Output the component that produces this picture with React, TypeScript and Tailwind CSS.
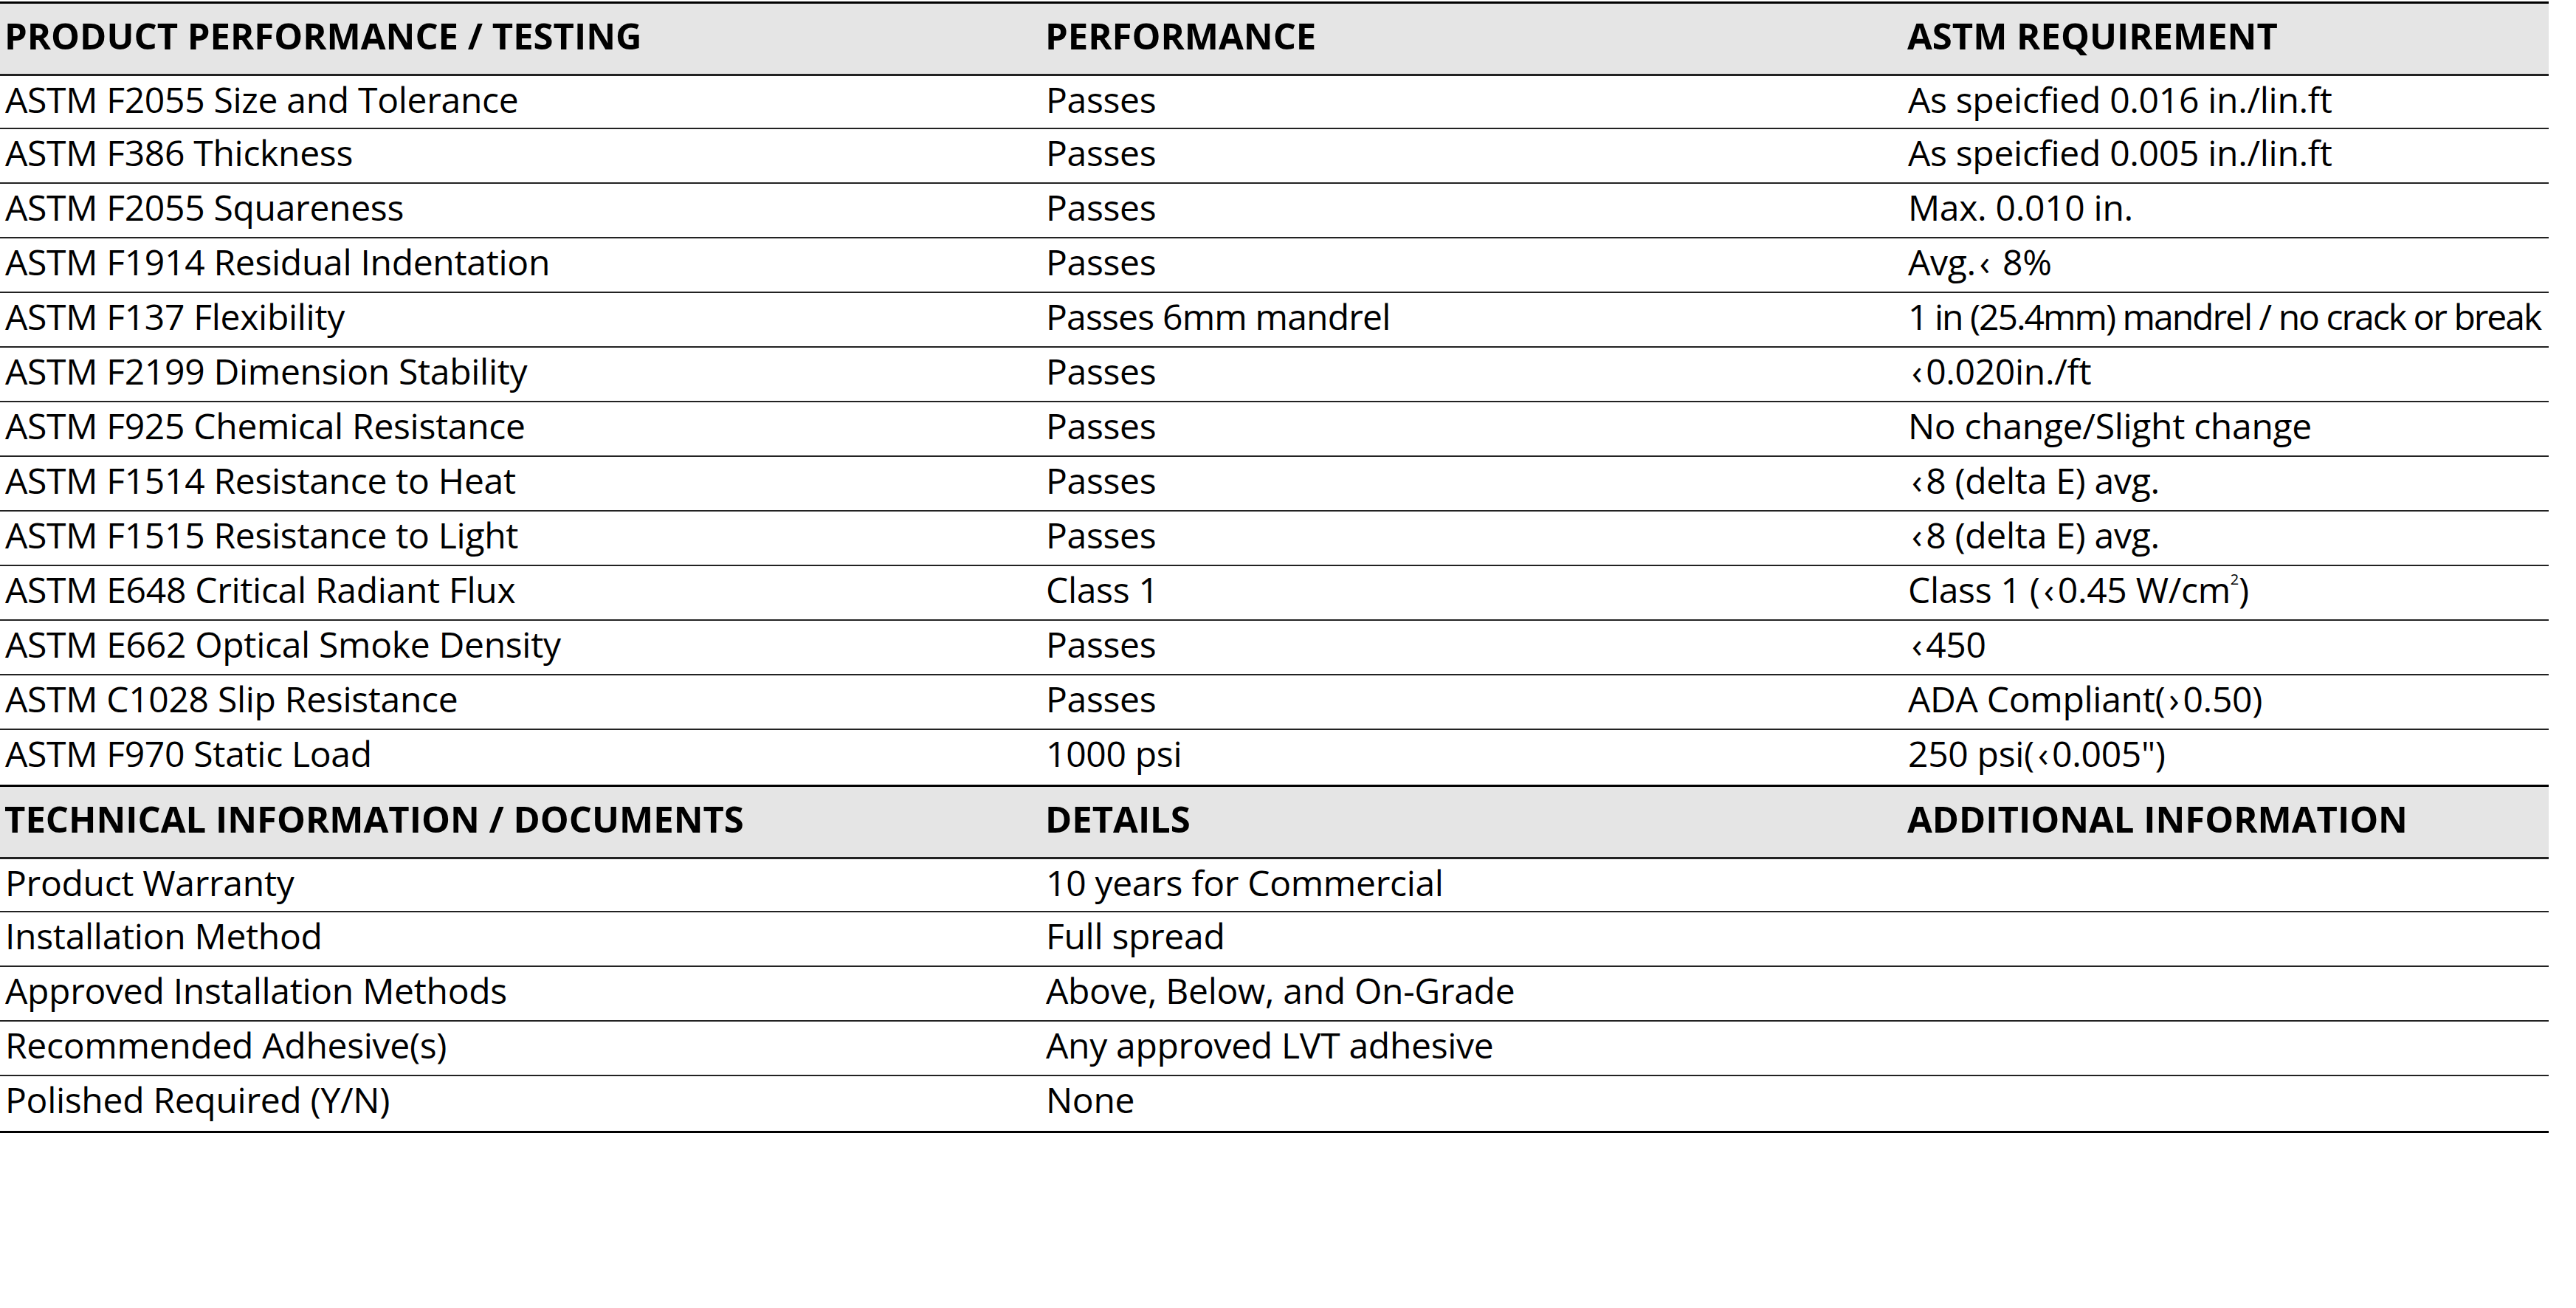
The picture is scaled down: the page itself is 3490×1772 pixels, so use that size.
import type { ReactNode } from "react";

const Lt = () => <span className="px-[5px]">‹</span>;
const Gt = () => <span className="px-[5px]">›</span>;

type Row = [ReactNode, ReactNode, ReactNode];

const performance: Row[] = [
  ["ASTM F2055 Size and Tolerance", "Passes", "As speicfied 0.016 in./lin.ft"],
  ["ASTM F386 Thickness", "Passes", "As speicfied 0.005 in./lin.ft"],
  ["ASTM F2055 Squareness", "Passes", "Max. 0.010 in."],
  ["ASTM F1914 Residual Indentation", "Passes", <>Avg.<Lt /> 8%</>],
  [
    "ASTM F137 Flexibility",
    <span className="tracking-[-0.8px]">Passes 6mm mandrel</span>,
    <span className="tracking-[-2px]">1 in (25.4mm) mandrel / no crack or break</span>,
  ],
  ["ASTM F2199 Dimension Stability", "Passes", <><Lt />0.020in./ft</>],
  ["ASTM F925 Chemical Resistance", "Passes", "No change/Slight change"],
  ["ASTM F1514 Resistance to Heat", "Passes", <><Lt />8 (delta E) avg.</>],
  ["ASTM F1515 Resistance to Light", "Passes", <><Lt />8 (delta E) avg.</>],
  ["ASTM E648 Critical Radiant Flux", "Class 1", <>Class 1 (<Lt />0.45 W/cm<span className="text-[20px] align-top">2</span>)</>],
  ["ASTM E662 Optical Smoke Density", "Passes", <><Lt />450</>],
  ["ASTM C1028 Slip Resistance", "Passes", <>ADA Compliant(<Gt />0.50)</>],
  ["ASTM F970 Static Load", "1000 psi", <>250 psi(<Lt />0.005")</>],
];

const technical: Row[] = [
  ["Product Warranty", "10 years for Commercial", ""],
  ["Installation Method", "Full spread", ""],
  ["Approved Installation Methods", "Above, Below, and On-Grade", ""],
  ["Recommended Adhesive(s)", "Any approved LVT adhesive", ""],
  ["Polished Required (Y/N)", "None", ""],
];

const cols = "grid grid-cols-[1410px_1168px_1fr]";

function Section({ head, rows }: { head: [string, string, string]; rows: Row[] }) {
  return (
    <div>
      <div className={`${cols} h-[101px] bg-[#e5e5e5] border-t-[3px] border-b-[3px] border-t-black border-b-[#222]`}>
        {head.map((h, i) => (
          <div key={i} className="pl-[6px] pt-[19px] text-[49px] leading-none font-bold whitespace-nowrap">
            {h}
          </div>
        ))}
      </div>
      <div className="divide-y-2 divide-[#222]">
        {rows.map((r, i) => (
          <div key={i} className={`${cols} h-[74px] first:h-[72px]`}>
            {r.map((c, j) => (
              <div key={j} className="pl-[7px] pt-[8px] text-[48px] leading-none whitespace-nowrap tracking-[-0.3px]">
                {c}
              </div>
            ))}
          </div>
        ))}
      </div>
    </div>
  );
}

export default function App() {
  return (
    <div className="w-[3490px] h-[1772px] bg-white text-black font-['Open_Sans',sans-serif] pt-[2px]">
      <div className="w-[3453px] border-b-[3px] border-black">
        <Section head={["PRODUCT PERFORMANCE / TESTING", "PERFORMANCE", "ASTM REQUIREMENT"]} rows={performance} />
        <Section head={["TECHNICAL INFORMATION / DOCUMENTS", "DETAILS", "ADDITIONAL INFORMATION"]} rows={technical} />
      </div>
    </div>
  );
}
